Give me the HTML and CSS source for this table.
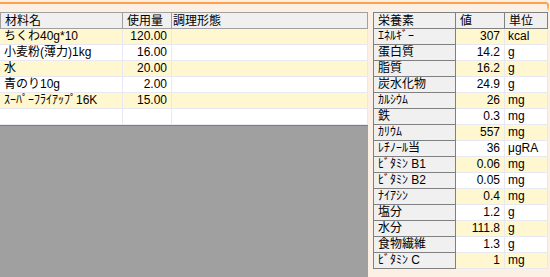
FILE: index.html
```
<!DOCTYPE html>
<html lang="ja">
<head>
  <meta charset="UTF-8" />
  <title>材料と栄養価</title>
  <link rel="stylesheet" href="styles.css">
</head>
<body>
  <div class="page">
    <!-- orange rule along the top of the sheet -->
    <div class="topline"></div>

    <div class="main">
      <!-- Ingredient grid -->
      <div class="left">
        <div class="grid materials">
          <div class="hd">材料名</div>
          <div class="hd">使用量</div>
          <div class="hd">調理形態</div>

          <div class="cell alt">ちくわ40g*10</div>
          <div class="cell alt num">120.00</div>
          <div class="cell alt"></div>

          <div class="cell">小麦粉(薄力)1kg</div>
          <div class="cell num">16.00</div>
          <div class="cell"></div>

          <div class="cell alt">水</div>
          <div class="cell alt num">20.00</div>
          <div class="cell alt"></div>

          <div class="cell">青のり10g</div>
          <div class="cell num">2.00</div>
          <div class="cell"></div>

          <div class="cell alt">ｽｰﾊﾟｰﾌﾗｲｱｯﾌﾟ16K</div>
          <div class="cell alt num">15.00</div>
          <div class="cell alt"></div>

          <div class="cell"></div>
          <div class="cell"></div>
          <div class="cell"></div>
        </div>
        <div class="blank"></div>
      </div>

      <div class="split"></div>

      <!-- Nutrient totals -->
      <div class="right">
        <div class="grid nutrients">
          <div class="hd">栄養素</div>
          <div class="hd">値</div>
          <div class="hd">単位</div>

          <div class="rowhd">ｴﾈﾙｷﾞｰ</div><div class="cell alt num">307</div><div class="cell alt">kcal</div>
          <div class="rowhd">蛋白質</div><div class="cell num">14.2</div><div class="cell">g</div>
          <div class="rowhd">脂質</div><div class="cell alt num">16.2</div><div class="cell alt">g</div>
          <div class="rowhd">炭水化物</div><div class="cell num">24.9</div><div class="cell">g</div>
          <div class="rowhd">ｶﾙｼｳﾑ</div><div class="cell alt num">26</div><div class="cell alt">mg</div>
          <div class="rowhd">鉄</div><div class="cell num">0.3</div><div class="cell">mg</div>
          <div class="rowhd">ｶﾘｳﾑ</div><div class="cell alt num">557</div><div class="cell alt">mg</div>
          <div class="rowhd">ﾚﾁﾉｰﾙ当</div><div class="cell num">36</div><div class="cell">μgRA</div>
          <div class="rowhd">ﾋﾞﾀﾐﾝ B1</div><div class="cell alt num">0.06</div><div class="cell alt">mg</div>
          <div class="rowhd">ﾋﾞﾀﾐﾝ B2</div><div class="cell num">0.05</div><div class="cell">mg</div>
          <div class="rowhd">ﾅｲｱｼﾝ</div><div class="cell alt num">0.4</div><div class="cell alt">mg</div>
          <div class="rowhd">塩分</div><div class="cell num">1.2</div><div class="cell">g</div>
          <div class="rowhd">水分</div><div class="cell alt num">111.8</div><div class="cell alt">g</div>
          <div class="rowhd">食物繊維</div><div class="cell num">1.3</div><div class="cell">g</div>
          <div class="rowhd">ﾋﾞﾀﾐﾝ C</div><div class="cell alt num">1</div><div class="cell alt">mg</div>
        </div>
      </div>
    </div>
  </div>
</body>
</html>
```

FILE: styles.css
```
* {
  margin: 0;
  padding: 0;
  box-sizing: border-box;
}

body {
  font-family: "Liberation Sans", "Noto Sans CJK JP", sans-serif;
  font-size: 12px;
  color: #000;
  background-color: #fcefe3;
}

.page {
  width: 550px;
  height: 277px;
  display: flex;
  flex-direction: column;
  overflow: hidden;
}

/* orange rule, bending down at the right end */
.topline {
  margin-top: 2px;
  width: 549px;
  height: 10px;
  border-top: 2px solid #ffa04a;
  border-right: 2px solid #ffa04a;
  border-top-right-radius: 3px;
  -webkit-mask-image: linear-gradient(to bottom, #000 40%, transparent);
}

.main {
  flex: 1;
  display: flex;
}

/* Shared grid look */
.grid {
  display: grid;
  grid-auto-rows: 16px;
}

.hd,
.cell,
.rowhd {
  line-height: 15px;
  padding: 0 4px;
  white-space: nowrap;
  overflow: hidden;
}

.hd {
  height: 17px;
  line-height: 16px;
  background-color: #f0f0f0;
  border-right: 1px solid #a0a0a0;
  border-bottom: 1px solid #a0a0a0;
  border-top: 1px solid #a0a0a0;
}

.cell {
  background-color: #fff;
  border-right: 1px solid #e8e8f0;
  border-bottom: 1px solid #e8e8f0;
}

.cell.alt {
  background-color: #fff7cf;
}

.num {
  text-align: right;
}

/* Ingredients */
.left {
  width: 368px;
  display: flex;
  flex-direction: column;
}

.materials {
  grid-template-columns: 123px 49px 196px;
  grid-template-rows: 17px;
}

.materials .hd:first-child {
  border-left: 1px solid #a0a0a0;
}

.materials .hd:nth-child(3) {
  padding-left: 1px;
}

.blank {
  flex: 1;
  background-color: #a0a0a0;
  border-top: 1px solid #808080;
}

/* splitter between panels */
.split {
  width: 5px;
}

/* Nutrients */
.right {
  width: 177px;
}

.nutrients {
  width: 174px;
  grid-template-columns: 82px 49px 43px;
  grid-template-rows: 17px;
  border-left: 1px solid #808080;
}

.rowhd {
  background-color: #f0f0f0;
  border-right: 1px solid #808080;
  border-bottom: 1px solid #808080;
}

.nutrients .hd {
  border-color: #808080;
}

.nutrients .cell {
  padding-left: 3px;
}
```
